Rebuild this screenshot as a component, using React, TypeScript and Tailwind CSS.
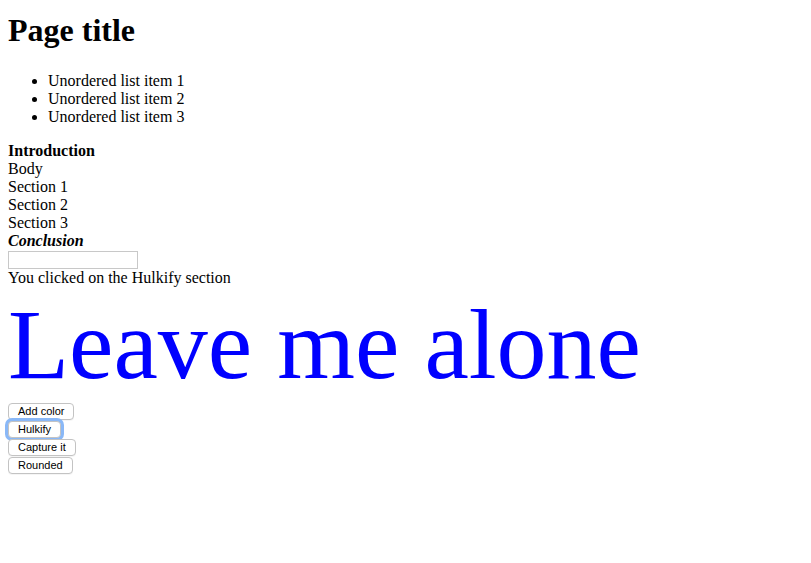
import React from "react";

const serif = "font-['Liberation_Serif','Times_New_Roman',serif]";

const buttons = ["Add color", "Hulkify", "Capture it", "Rounded"];

export default function App() {
  return (
    <div className={`${serif} min-h-[563px] bg-white px-2 pt-[12px] text-black`}>
      <h1 className="text-[32px] font-bold leading-[37px]">Page title</h1>

      <ul className="mt-[23px] list-disc pl-10 text-[16px] leading-[18px]">
        <li>Unordered list item 1</li>
        <li>Unordered list item 2</li>
        <li>Unordered list item 3</li>
      </ul>

      {/* sections */}
      <div className="mt-[16px] text-[16px] leading-[18px]">
        <div className="font-bold">Introduction</div>
        <div>Body</div>
        <div>Section 1</div>
        <div>Section 2</div>
        <div>Section 3</div>
        <div className="font-bold italic">Conclusion</div>
        <input
          type="text"
          className="mt-[1px] block h-[18px] w-[130px] border border-[#c8c8c8] bg-white px-1 outline-none"
        />
        <div className="h-[18px]">You clicked on the Hulkify section</div>
      </div>

      <div className="text-[100px] leading-[115px] text-[#0000ff]">Leave me alone</div>

      <div className="flex flex-col">
        {buttons.map((label) => (
          <div key={label} className="flex h-[18px] items-center">
            <button
              className={`flex h-[17px] items-center rounded-[4px] border border-[#c3c3c3] bg-white px-[9px] font-['Liberation_Sans',Arial,sans-serif] text-[11px] leading-none text-black shadow-[0_1px_0_rgba(0,0,0,0.04)] ${
                label === "Hulkify" ? "ring-[3px] ring-[#8ab8f7]" : ""
              }`}
            >
              {label}
            </button>
          </div>
        ))}
      </div>
    </div>
  );
}
